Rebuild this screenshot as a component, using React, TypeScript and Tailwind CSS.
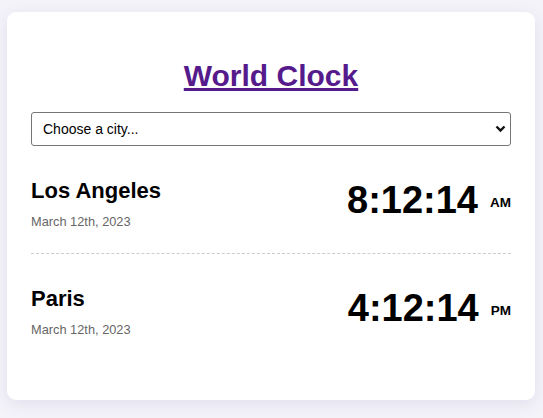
import { useState } from "react";

type City = {
  name: string;
  date: string;
  time: string;
  period: string;
};

const cities: City[] = [
  { name: "Los Angeles", date: "March 12th, 2023", time: "8:12:14", period: "AM" },
  { name: "Paris", date: "March 12th, 2023", time: "4:12:14", period: "PM" },
];

function CityRow({ city, last }: { city: City; last: boolean }) {
  return (
    <div
      className={`flex justify-between items-start pt-[32px] pb-[24px] ${
        last ? "" : "border-b border-dashed border-[#cccccc]"
      }`}
    >
      <div>
        <div className="text-[22px] leading-[25px] font-bold text-black">
          {city.name}
        </div>
        <div className="mt-[11px] text-[12.8px] leading-[15px] text-[#666666]">
          {city.date}
        </div>
      </div>
      <div className="flex items-start mt-[3px]">
        <span className="text-[38px] leading-[38px] font-bold text-black">
          {city.time}
        </span>
        <span className="ml-3 mt-[15px] text-[13.5px] leading-[13.5px] font-bold text-black">
          {city.period}
        </span>
      </div>
    </div>
  );
}

export default function App() {
  const [city, setCity] = useState("");

  return (
    <div
      className="min-h-screen bg-[#f4f3f9] pt-3"
      style={{ fontFamily: '"Liberation Sans", Arial, sans-serif' }}
    >
      <div className="w-[528px] ml-[7px] bg-white rounded-[9px] shadow-[0_4px_16px_rgba(90,80,160,0.12)] px-6 pt-[47px] pb-[39px]">
        <h1 className="text-center text-[30px] leading-[34px] font-bold">
          <a href="#" className="text-[#551a8b] underline">
            World Clock
          </a>
        </h1>

        <div className="relative mt-[19px]">
          <select
            value={city}
            onChange={(e) => setCity(e.target.value)}
            className="appearance-none w-full h-[34px] pl-[11px] pr-8 text-[14px] text-black bg-white border border-[#767676] rounded-[3px]"
          >
            <option value="">Choose a city...</option>
            <option value="tokyo">Tokyo</option>
            <option value="london">London</option>
            <option value="sydney">Sydney</option>
          </select>
          <svg
            className="absolute right-[5px] top-[13px] pointer-events-none"
            width="11"
            height="8"
            viewBox="0 0 11 8"
            fill="none"
          >
            <path d="M1.5 1.5 L5.5 5.5 L9.5 1.5" stroke="#111" strokeWidth="2.4" />
          </svg>
        </div>

        {cities.map((c, i) => (
          <CityRow key={c.name} city={c} last={i === cities.length - 1} />
        ))}
      </div>
    </div>
  );
}
